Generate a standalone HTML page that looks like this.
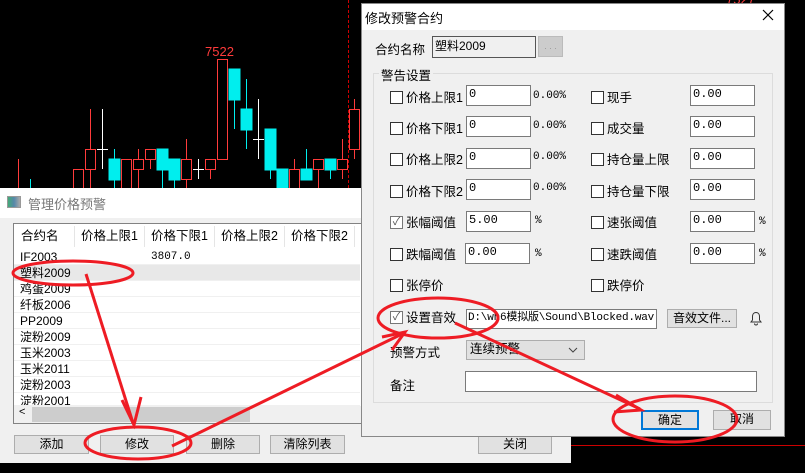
<!DOCTYPE html>
<html><head><meta charset="utf-8"><style>
*{margin:0;padding:0;box-sizing:border-box}
body{width:805px;height:473px;background:#000;position:relative;overflow:hidden;font-family:"Liberation Sans","Noto Sans CJK SC",sans-serif;font-size:12px;color:#000}
.a{position:absolute;white-space:nowrap}
.btn{position:absolute;background:#e1e1e1;border:1px solid #adadad;text-align:center;font-size:12px;line-height:16px;white-space:nowrap}
.inp{position:absolute;background:#fff;border:1px solid #7a7a7a;font-family:"Liberation Mono","Noto Sans CJK SC",monospace;font-size:12px;padding-left:2px;line-height:16px;white-space:nowrap;overflow:hidden}
.cb{position:absolute;width:13px;height:13px;border:1px solid #333;background:#fff}
.lbl{position:absolute;font-size:12.5px;white-space:nowrap}
.mono{font-family:"Liberation Mono",monospace;font-size:11px}
.row{position:absolute;left:14px;width:346px;height:16px;border-bottom:1px solid #f0f0f0;font-size:12px;line-height:16px}
</style></head><body>
<svg class="a" style="left:0;top:0" width="805" height="473">
<g stroke="#ff3b3b" fill="none" stroke-width="1">
<line x1="18.5" y1="159" x2="18.5" y2="188"/>
<rect x="73.5" y="169.5" width="10" height="19"/>
<line x1="90.5" y1="109" x2="90.5" y2="188"/><rect x="85.5" y="149.5" width="10" height="20" fill="#000"/>
<rect x="121.5" y="159.5" width="10" height="29"/>
<line x1="138.5" y1="149" x2="138.5" y2="188"/><rect x="133.5" y="159.5" width="10" height="10" fill="#000"/>
<line x1="150.5" y1="149" x2="150.5" y2="169"/><rect x="145.5" y="149.5" width="10" height="10" fill="#000"/>
<line x1="186.5" y1="139" x2="186.5" y2="188"/><rect x="181.5" y="159.5" width="10" height="20" fill="#000"/>
<line x1="210.5" y1="159" x2="210.5" y2="179"/><rect x="205.5" y="159.5" width="10" height="10" fill="#000"/>
<rect x="217.5" y="59.5" width="10" height="100"/>
<line x1="294.5" y1="159" x2="294.5" y2="188"/><rect x="289.5" y="169.5" width="10" height="19" fill="#000"/>
<line x1="318.5" y1="159" x2="318.5" y2="188"/><rect x="313.5" y="159.5" width="10" height="10" fill="#000"/>
<line x1="342.5" y1="139" x2="342.5" y2="179"/><rect x="337.5" y="159.5" width="10" height="10" fill="#000"/>
<line x1="354.5" y1="99" x2="354.5" y2="159"/><rect x="349.5" y="109.5" width="10" height="40" fill="#000"/>
<line x1="348.5" y1="0" x2="348.5" y2="188" stroke="#c00" stroke-dasharray="3,2"/>
<line x1="571" y1="445.5" x2="805" y2="445.5" stroke="#c00"/>
</g>
<g fill="#00eeee" stroke="#00eeee">
<line x1="30.5" y1="179" x2="30.5" y2="188"/>
<line x1="114.5" y1="149" x2="114.5" y2="188"/><rect x="109" y="159" width="11" height="21"/>
<line x1="162.5" y1="149" x2="162.5" y2="188"/><rect x="157" y="149" width="11" height="21"/>
<line x1="174.5" y1="159" x2="174.5" y2="188"/><rect x="169" y="159" width="11" height="21"/>
<line x1="234.5" y1="69" x2="234.5" y2="129"/><rect x="229" y="69" width="11" height="31"/>
<line x1="246.5" y1="79" x2="246.5" y2="149"/><rect x="241" y="109" width="11" height="21"/>
<line x1="270.5" y1="129" x2="270.5" y2="179"/><rect x="265" y="129" width="11" height="41"/>
<rect x="277" y="169" width="11" height="19"/>
<line x1="306.5" y1="149" x2="306.5" y2="179"/><rect x="301" y="169" width="11" height="11"/>
<line x1="330.5" y1="159" x2="330.5" y2="179"/><rect x="325" y="159" width="11" height="11"/>
</g>
<g stroke="#fff">
<line x1="102.5" y1="109" x2="102.5" y2="169"/><line x1="97" y1="149.5" x2="108" y2="149.5"/>
<line x1="198.5" y1="159" x2="198.5" y2="179"/><line x1="193" y1="169.5" x2="204" y2="169.5"/>
<line x1="258.5" y1="99" x2="258.5" y2="159"/><line x1="253" y1="139.5" x2="264" y2="139.5"/>
</g>
<text x="205" y="56" fill="#ff3b3b" font-family="Liberation Sans" font-size="13">7522</text>
<text x="726" y="4" fill="#ff3b3b" font-family="Liberation Sans" font-size="13">7527</text>
</svg>

<!-- left dialog -->
<div class="a" style="left:0;top:188px;width:571px;height:275px;background:#f0f0f0"></div>
<div class="a" style="left:0;top:188px;width:571px;height:30px;background:#fff"></div>
<div class="a" style="left:7px;top:196px;width:14px;height:12px;background:linear-gradient(90deg,#4a7 0,#58a 50%,#aaa 100%);border:1px solid #999"></div>
<div class="a" style="left:28px;top:194px;font-size:13px;color:#777">管理价格预警</div>
<div class="a" style="left:13px;top:223px;width:360px;height:201px;background:#fff;border:1px solid #828282"></div>
<div class="a" style="left:14px;top:224px;width:350px;height:25px;background:#fff;font-size:12.5px;line-height:25px">
<span class="a" style="left:7px">合约名</span><span class="a" style="left:67px">价格上限1</span><span class="a" style="left:137px">价格下限1</span><span class="a" style="left:207px">价格上限2</span><span class="a" style="left:277px">价格下限2</span>
<span class="a" style="left:60px;top:2px;height:21px;border-left:1px solid #e5e5e5"></span><span class="a" style="left:130px;top:2px;height:21px;border-left:1px solid #e5e5e5"></span><span class="a" style="left:200px;top:2px;height:21px;border-left:1px solid #e5e5e5"></span><span class="a" style="left:270px;top:2px;height:21px;border-left:1px solid #e5e5e5"></span><span class="a" style="left:340px;top:2px;height:21px;border-left:1px solid #e5e5e5"></span>
</div>
<div class="row" style="top:249px"><span class="a" style="left:6px">IF2003</span><span class="a mono" style="left:137px">3807.0</span></div>
<div class="row" style="top:265px;background:#e8e8e8"><span class="a" style="left:6px">塑料2009</span></div>
<div class="row" style="top:281px"><span class="a" style="left:6px">鸡蛋2009</span></div>
<div class="row" style="top:297px"><span class="a" style="left:6px">纤板2006</span></div>
<div class="row" style="top:313px"><span class="a" style="left:6px">PP2009</span></div>
<div class="row" style="top:329px"><span class="a" style="left:6px">淀粉2009</span></div>
<div class="row" style="top:345px"><span class="a" style="left:6px">玉米2003</span></div>
<div class="row" style="top:361px"><span class="a" style="left:6px">玉米2011</span></div>
<div class="row" style="top:377px"><span class="a" style="left:6px">淀粉2003</span></div>
<div class="row" style="top:393px;height:13px;overflow:hidden"><span class="a" style="left:6px">淀粉2001</span></div>
<div class="a" style="left:14px;top:406px;width:350px;height:17px;background:#f0f0f0"></div>
<div class="a" style="left:32px;top:407px;width:218px;height:15px;background:#cdcdcd"></div>
<div class="a" style="left:19px;top:406px;font-size:11px">&lt;</div>
<div class="btn" style="left:14px;top:435px;width:75px;height:19px">添加</div>
<div class="btn" style="left:100px;top:435px;width:74px;height:19px">修改</div>
<div class="btn" style="left:186px;top:435px;width:74px;height:19px">删除</div>
<div class="btn" style="left:270px;top:435px;width:75px;height:19px">清除列表</div>
<div class="btn" style="left:478px;top:435px;width:74px;height:19px">关闭</div>

<!-- right dialog -->
<div class="a" style="left:361px;top:3px;width:424px;height:434px;background:#f0f0f0;border:1px solid #888"></div>
<div class="a" style="left:362px;top:4px;width:422px;height:26px;background:#fff"></div>
<div class="a" style="left:365px;top:8px;font-size:13px">修改预警合约</div>
<svg class="a" style="left:762px;top:9px" width="12" height="12"><path d="M1 1L11 11M11 1L1 11" stroke="#000" stroke-width="1.2"/></svg>
<div class="lbl" style="left:375px;top:39px">合约名称</div>
<div class="inp" style="left:432px;top:36px;width:104px;height:22px;background:#f0f0f0;border-color:#555;font-family:'Liberation Sans','Noto Sans CJK SC',sans-serif;line-height:18px">塑料2009</div>
<div class="a" style="left:538px;top:36px;width:25px;height:21px;background:#ccc;border:1px solid #bbb;color:#999;font-size:9px;text-align:center;line-height:18px">. . .</div>
<div class="a" style="left:373px;top:73px;width:400px;height:330px;border:1px solid #dcdcdc"></div>
<div class="lbl" style="left:379px;top:65px;background:#f0f0f0;padding:0 2px">警告设置</div>

<div class="cb" style="left:390px;top:91px"></div><div class="lbl" style="left:406px;top:87px">价格上限1</div><div class="inp" style="left:466px;top:85px;width:65px;height:21px">0</div><div class="a mono" style="left:533px;top:90px">0.00%</div>
<div class="cb" style="left:591px;top:91px"></div><div class="lbl" style="left:607px;top:87px">现手</div><div class="inp" style="left:690px;top:85px;width:65px;height:21px">0.00</div>
<div class="cb" style="left:390px;top:122px"></div><div class="lbl" style="left:406px;top:118px">价格下限1</div><div class="inp" style="left:466px;top:116px;width:65px;height:21px">0</div><div class="a mono" style="left:533px;top:120px">0.00%</div>
<div class="cb" style="left:591px;top:122px"></div><div class="lbl" style="left:607px;top:118px">成交量</div><div class="inp" style="left:690px;top:116px;width:65px;height:21px">0.00</div>
<div class="cb" style="left:390px;top:153px"></div><div class="lbl" style="left:406px;top:149px">价格上限2</div><div class="inp" style="left:466px;top:148px;width:65px;height:21px">0</div><div class="a mono" style="left:533px;top:151px">0.00%</div>
<div class="cb" style="left:591px;top:153px"></div><div class="lbl" style="left:607px;top:149px">持仓量上限</div><div class="inp" style="left:690px;top:148px;width:65px;height:21px">0.00</div>
<div class="cb" style="left:390px;top:185px"></div><div class="lbl" style="left:406px;top:181px">价格下限2</div><div class="inp" style="left:466px;top:179px;width:65px;height:21px">0</div><div class="a mono" style="left:533px;top:182px">0.00%</div>
<div class="cb" style="left:591px;top:185px"></div><div class="lbl" style="left:607px;top:181px">持仓量下限</div><div class="inp" style="left:690px;top:179px;width:65px;height:21px">0.00</div>
<div class="cb" style="left:390px;top:216px;border-color:#777;font-size:11px;line-height:11px;color:#555;text-align:center">✓</div><div class="lbl" style="left:406px;top:212px">张幅阈值</div><div class="inp" style="left:466px;top:211px;width:65px;height:21px">5.00</div><div class="a mono" style="left:535px;top:215px">%</div>
<div class="cb" style="left:591px;top:216px"></div><div class="lbl" style="left:607px;top:212px">速张阈值</div><div class="inp" style="left:690px;top:211px;width:65px;height:21px">0.00</div><div class="a mono" style="left:759px;top:216px">%</div>
<div class="cb" style="left:390px;top:248px"></div><div class="lbl" style="left:406px;top:244px">跌幅阈值</div><div class="inp" style="left:465px;top:243px;width:65px;height:21px">0.00</div><div class="a mono" style="left:535px;top:248px">%</div>
<div class="cb" style="left:591px;top:248px"></div><div class="lbl" style="left:607px;top:244px">速跌阈值</div><div class="inp" style="left:690px;top:243px;width:65px;height:21px">0.00</div><div class="a mono" style="left:759px;top:248px">%</div>
<div class="cb" style="left:390px;top:279px"></div><div class="lbl" style="left:406px;top:275px">张停价</div>
<div class="cb" style="left:591px;top:279px"></div><div class="lbl" style="left:607px;top:275px">跌停价</div>
<div class="cb" style="left:390px;top:311px;border-color:#777;font-size:11px;line-height:11px;color:#555;text-align:center">✓</div><div class="lbl" style="left:406px;top:307px">设置音效</div>
<div class="inp" style="left:466px;top:309px;width:191px;height:20px;font-size:11px;letter-spacing:-0.2px;padding-left:1px">D:\wh6模拟版\Sound\Blocked.wav</div>
<div class="btn" style="left:667px;top:309px;width:70px;height:19px;font-size:12px">音效文件...</div>
<svg class="a" style="left:749px;top:310px" width="14" height="16"><path d="M7 2.5c-2.5 0-3.5 2-3.5 4v3.5L2 12h10l-1.5-2V6.5c0-2-1-4-3.5-4zM5.5 13.5a1.5 1.5 0 0 0 3 0" stroke="#333" fill="none"/></svg>
<div class="lbl" style="left:390px;top:342px">预警方式</div>
<div class="a" style="left:466px;top:340px;width:119px;height:20px;background:#e1e1e1;border:1px solid #adadad;font-size:12.5px;line-height:17px;padding-left:3px">连续预警<svg class="a" style="left:101px;top:6px" width="10" height="6"><path d="M1 1L5 5L9 1" stroke="#444" fill="none"/></svg></div>
<div class="lbl" style="left:390px;top:375px">备注</div>
<div class="inp" style="left:465px;top:371px;width:292px;height:21px"></div>
<div class="btn" style="left:641px;top:410px;width:58px;height:20px;border:2px solid #0078d7">确定</div>
<div class="btn" style="left:713px;top:410px;width:58px;height:20px">取消</div>

<!-- annotations -->
<svg class="a" style="left:0;top:0" width="805" height="473">
<g stroke="#ee1c24" stroke-width="3" fill="none">
<ellipse cx="73" cy="273" rx="60" ry="12"/>
<line x1="86" y1="274" x2="133" y2="423"/>
<path d="M122 400L134 425L141 397"/>
<ellipse cx="138" cy="443" rx="53" ry="16"/>
<line x1="172" y1="446" x2="404" y2="333"/>
<path d="M382 337L405 332L392 350"/>
<ellipse cx="438" cy="318" rx="60" ry="20"/>
<line x1="455" y1="323" x2="640" y2="409"/>
<path d="M616 395L641 410L614 412"/>
<ellipse cx="675" cy="419" rx="62" ry="23"/>
</g>
</svg>
</body></html>
